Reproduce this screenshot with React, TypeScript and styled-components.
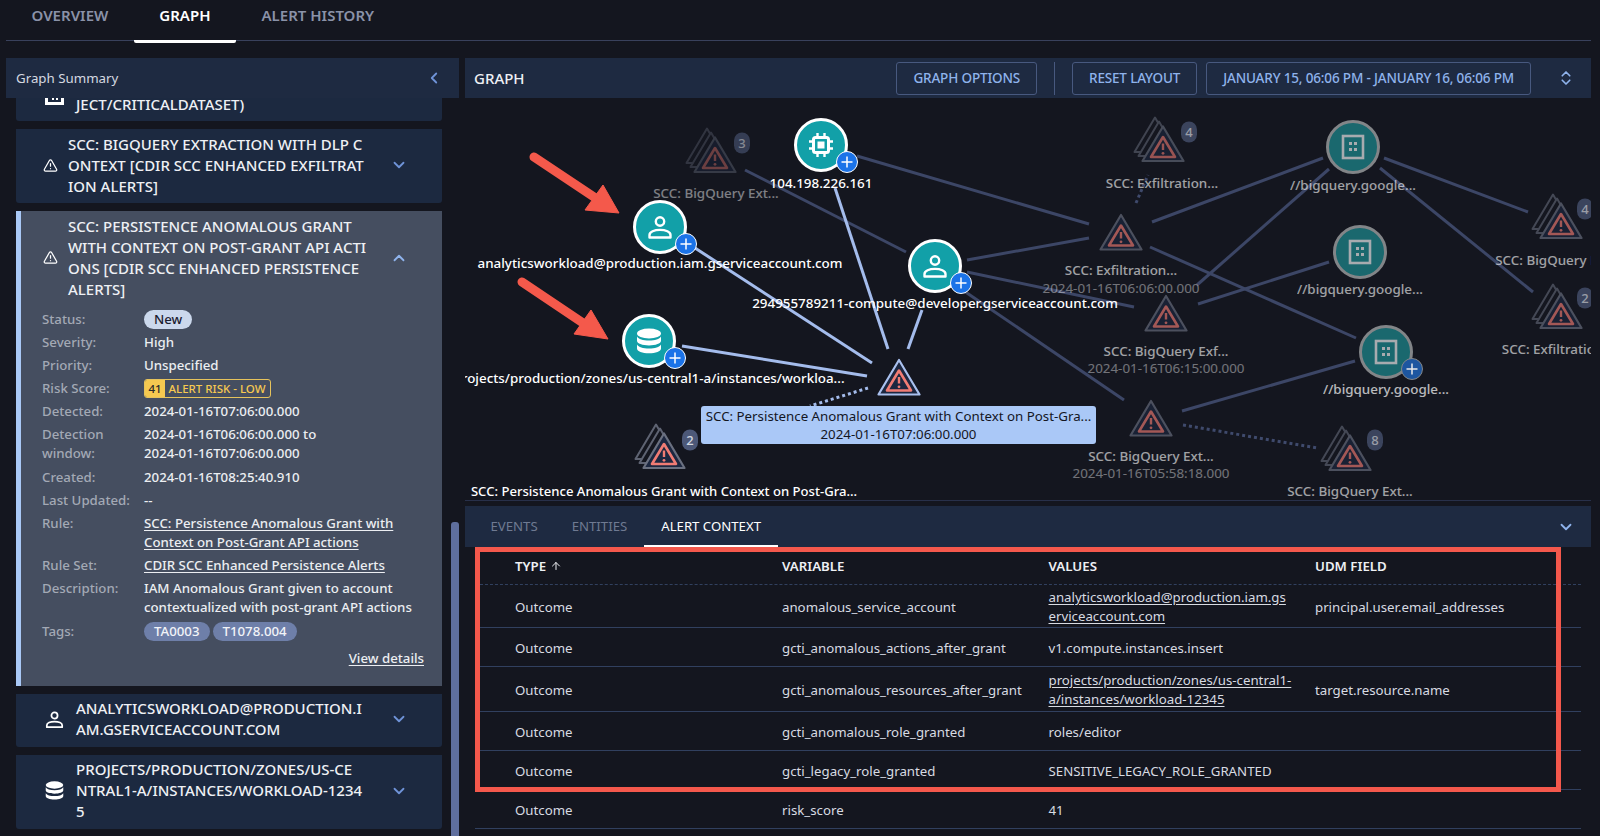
import React from 'react';
import styled, { createGlobalStyle } from 'styled-components';
import { ChevronDown, ChevronUp, ChevronLeft, ChevronsUpDown, TriangleAlert, ArrowUp } from 'lucide-react';

const GlobalStyle = createGlobalStyle`
  html, body { margin: 0; padding: 0; background: #14161f; }
  * { box-sizing: border-box; }
  body { font-family: "Noto Sans", "Open Sans", sans-serif; font-size: 14px; color: #e4e7ec; }
`;

const Page = styled.div`
  width: 1600px;
  height: 836px;
  overflow: hidden;
  background: #14161f;
`;

const TabBar = styled.div`
  display: flex;
  height: 41px;
  margin: 0 9px 0 6px;
  border-bottom: 1px solid #39415c;
`;

const Tab = styled.div<{ $active?: boolean }>`
  height: 43px;
  padding: 5px 25.5px 0;
  font-size: 15px;
  line-height: 20px;
  font-weight: 600;
  color: ${p => (p.$active ? '#ffffff' : '#8a92a8')};
  border-bottom: ${p => (p.$active ? '3px solid #ffffff' : '3px solid transparent')};
  border-radius: 0 0 2px 2px;
`;

const Main = styled.div`
  display: flex;
  gap: 6px;
  padding: 17px 9px 0 6px;
`;

const LeftPanel = styled.div`
  width: 453px;
  height: 778px;
  display: flex;
  flex-direction: column;
`;

const PanelHeader = styled.div`
  flex: none;
  height: 40px;
  display: flex;
  align-items: center;
  padding: 0 16px 0 10px;
  justify-content: space-between;
  background: #1e2a41;
  font-size: 13.3px;
  color: #d5d9e0;
`;

const LeftBody = styled.div`
  flex: 1;
  display: flex;
  overflow: hidden;
`;

const List = styled.div`
  width: 445px;
  padding: 0 9px 0 10px;
  display: flex;
  flex-direction: column;
  gap: 8px;
`;

const ScrollTrack = styled.div`
  width: 8px;
  padding-top: 424px;
`;

const ScrollThumb = styled.div`
  height: 320px;
  background: #5f6f9e;
  border-radius: 3px 3px 0 0;
`;

const Item = styled.div<{ $open?: boolean }>`
  flex: none;
  background: ${p => (p.$open ? '#454e60' : '#1c2940')};
  box-shadow: ${p => (p.$open ? 'inset 5px 0 0 #a9c8f6' : 'none')};
  border-radius: ${p => (p.$open ? '0' : '0 0 3px 3px')};
`;

const ItemHead = styled.div<{ $big?: boolean }>`
  display: flex;
  align-items: center;
  padding: 4.5px 34px 6.5px ${p => (p.$big ? '29px' : '27px')};
  gap: ${p => (p.$big ? '12px' : '10px')};
  color: #ffffff;
`;

const CutHead = styled(ItemHead)`
  height: 23px;
  padding-top: 0;
  padding-bottom: 0;
  align-items: flex-start;
`;

const ItemTitle = styled.div`
  flex: 1;
  font-size: 15px;
  line-height: 21px;
  font-weight: 500;
  white-space: nowrap;
  color: #eef0f4;
`;

const CutTitle = styled(ItemTitle)`
  margin-top: -4px;
`;

const TitleLine = styled.span`
  display: block;
`;

const Details = styled.div`
  display: grid;
  grid-template-columns: 102px 1fr;
  row-gap: 4.2px;
  padding: 3.5px 18px 0 26px;
  line-height: 19px;
  font-size: 13.25px;
  font-weight: 500;
`;

const Label = styled.div`
  color: #a3a9b5;
`;

const Value = styled.div`
  color: #eceef2;
  white-space: nowrap;
`;

const Linked = styled.a`
  color: #eceef2;
  text-decoration: underline;
  text-underline-offset: 2px;
`;

const Pill = styled.span<{ $tag?: boolean }>`
  display: inline-block;
  height: 19px;
  padding: 0 10px;
  margin-right: 3px;
  border-radius: 10px;
  line-height: 19px;
  background: ${p => (p.$tag ? '#6e7fa9' : '#cbd8ec')};
  color: ${p => (p.$tag ? '#f2f4f8' : '#1b2030')};
`;

const RiskBadge = styled.span`
  display: inline-flex;
  height: 19px;
  border: 1px solid #e6c35c;
  border-radius: 3px;
  overflow: hidden;
  font-size: 11.5px;
  line-height: 17px;
`;

const RiskNum = styled.span`
  width: 20px;
  text-align: center;
  background: #f6c950;
  color: #2a2a2a;
`;

const RiskText = styled.span`
  padding: 0 4px 0 3.5px;
  color: #f6c950;
`;

const ViewDetails = styled.div`
  margin-top: 8px;
  padding: 0 18px 18px 0;
  text-align: right;
  line-height: 19px;
  font-size: 13.25px;
  font-weight: 500;
`;

const RightPanel = styled.div`
  width: 1126px;
  display: flex;
  flex-direction: column;
`;

const GraphHeader = styled(PanelHeader)`
  padding: 0 16px 0 9px;
  justify-content: flex-start;
  font-size: 15px;
  font-weight: 500;
  color: #eef0f4;
`;

const GraphTools = styled.div`
  margin-left: auto;
  display: flex;
  align-items: center;
  gap: 9px;
`;

const ToolButton = styled.div`
  height: 33px;
  padding: 0 16px;
  display: flex;
  align-items: center;
  border: 1px solid #48597f;
  border-radius: 3px;
  font-size: 13.5px;
  letter-spacing: -0.16px;
  font-weight: 500;
  color: #8fb3ec;
  white-space: nowrap;
`;

const ToolDivider = styled.div`
  width: 1px;
  height: 33px;
  margin: 0 8px;
  background: #48597f;
`;

const UnfoldWrap = styled.div`
  display: flex;
  margin-left: 17px;
  color: #8fb3ec;
`;

const Canvas = styled.div`
  position: relative;
  height: 403px;
  overflow: hidden;
  border-bottom: 1px solid #28304a;
  background: #14161f;
`;

const EdgeLayer = styled.svg`
  position: absolute;
  inset: 0;
`;

const NodeBox = styled.div<{ $x: number; $y: number; $fade?: number }>`
  position: absolute;
  left: ${p => p.$x - 465}px;
  top: ${p => p.$y - 98}px;
  transform: translate(-50%, -50%);
  opacity: ${p => p.$fade ?? 1};
  display: flex;
`;

const Circle = styled.div<{ $dim?: boolean }>`
  width: 54px;
  height: 54px;
  border-radius: 50%;
  display: flex;
  align-items: center;
  justify-content: center;
  background: ${p => (p.$dim ? '#1b7177' : '#12a0a8')};
  border: 3px solid ${p => (p.$dim ? '#8f9294' : '#ffffff')};
`;

const PlusBadge = styled.div<{ $dim?: boolean }>`
  position: absolute;
  right: -10px;
  bottom: -1px;
  width: 22px;
  height: 22px;
  border-radius: 50%;
  background: ${p => (p.$dim ? '#1f5eae' : '#1b73e8')};
  border: 1.5px solid ${p => (p.$dim ? '#8f9294' : '#ffffff')};
  display: flex;
  align-items: center;
  justify-content: center;
`;

const CountBadge = styled.div<{ $x: number; $y: number; $fade?: number }>`
  position: absolute;
  left: ${p => p.$x - 465}px;
  top: ${p => p.$y - 98}px;
  transform: translate(-50%, -50%);
  width: 16px;
  height: 21px;
  border-radius: 8px;
  background: #4c5878;
  color: #d3d7e0;
  opacity: ${p => p.$fade ?? 1};
  font-size: 13px;
  line-height: 21px;
  font-weight: 500;
  text-align: center;
`;

const NodeLabel = styled.div<{ $x: number; $y: number; $tone?: number }>`
  position: absolute;
  left: ${p => p.$x - 465}px;
  top: ${p => p.$y - 98}px;
  transform: translate(-50%, -50%);
  white-space: nowrap;
  font-size: 13.4px;
  line-height: 19px;
  font-weight: 500;
  color: #ffffff;
  opacity: ${p => p.$tone ?? 1};
`;

const StampLabel = styled(NodeLabel)`
  font-weight: 400;
`;

const LongLabel = styled(NodeLabel)`
  font-size: 13.1px;
`;

const Tooltip = styled.div`
  position: absolute;
  left: 236px;
  top: 308px;
  width: 395px;
  height: 38px;
  border-radius: 3px;
  background: #aac8f7;
  color: #14161f;
  font-size: 13.3px;
  line-height: 18px;
  text-align: center;
  padding-top: 1px;
  white-space: nowrap;
`;

const BottomPanel = styled.div`
  position: relative;
  margin-top: 5px;
  flex: 1;
`;

const BottomHeader = styled.div`
  height: 41px;
  display: flex;
  align-items: flex-end;
  padding: 0 16px 0 8.5px;
  background: #1e2a41;
`;

const SubTab = styled.div<{ $active?: boolean }>`
  height: 38px;
  padding: 8px 17px 0;
  font-size: 13.2px;
  line-height: 19px;
  color: ${p => (p.$active ? '#ffffff' : '#6f7a92')};
  border-bottom: 2px solid ${p => (p.$active ? '#ffffff' : 'transparent')};
`;

const BottomChevron = styled.div`
  margin: 0 0 11px auto;
  display: flex;
  color: #8fb3ec;
`;

const Table = styled.div`
  margin: 0 10px;
`;

const Row = styled.div<{ $h: number; $head?: boolean }>`
  display: grid;
  grid-template-columns: 267px 266.5px 266.5px 1fr;
  align-items: center;
  height: ${p => p.$h}px;
  padding: ${p => (p.$head ? '1px' : '2px')} 0 0 40px;
  line-height: 19px;
  border-bottom: 1px ${p => (p.$head ? 'dashed' : 'solid')} #31405f;
  font-size: 13.25px;
  font-weight: ${p => (p.$head ? 600 : 400)};
  color: ${p => (p.$head ? '#eef0f4' : '#d8dbe2')};
`;

const HeadCell = styled.div`
  display: flex;
  align-items: center;
  gap: 4px;
`;

const CellLink = styled.a`
  display: block;
  color: #d8dbe2;
  text-decoration: underline;
  text-underline-offset: 2px;
  white-space: nowrap;
`;

const RedBox = styled.div`
  position: absolute;
  left: 10px;
  top: 41px;
  width: 1086px;
  height: 245px;
  border: 5px solid #f4584c;
  pointer-events: none;
`;

// icons

const PersonIcon = ({ size = 26 }: { size?: number }) => (
  <svg width={size} height={size} viewBox="0 0 26 26" fill="none" stroke="#fff" strokeWidth="2.4">
    <circle cx="13" cy="7.5" r="4.2" />
    <path d="M2.5 23.5v-2.6c0-3 4.8-5 10.5-5s10.5 2 10.5 5v2.6z" strokeLinejoin="round" />
  </svg>
);

const DbIcon = ({ size = 26 }: { size?: number }) => (
  <svg width={size} height={size} viewBox="0 0 26 26" fill="#fff">
    <ellipse cx="13" cy="5.5" rx="12" ry="5" />
    <path d="M1 8.6c1.6 2.6 6 4 12 4s10.4-1.4 12-4v4.2c0 2.8-5.4 4.6-12 4.6S1 15.600 1 12.800z" />
    <path d="M1 16.600c1.600 2.600 6 4 12 4s10.400-1.400 12-4v3.800c0 2.800-5.400 4.800-12 4.800S1 23.200 1 20.400z" />
  </svg>
);

const CpuIcon = () => (
  <svg width="28" height="28" viewBox="0 0 28 28" fill="none" stroke="#fff">
    <rect x="6.500" y="6.500" width="15" height="15" rx="2" strokeWidth="3" />
    <rect x="10.500" y="10.500" width="7" height="7" fill="#fff" strokeWidth="0" />
    <path d="M10.500 2v4M17.500 2v4M10.500 22v4M17.500 22v4M2 10.500h4M2 17.500h4M22 10.500h4M22 17.500h4" strokeWidth="2.400" />
  </svg>
);

const ResourceIcon = () => (
  <svg width="24" height="26" viewBox="0 0 24 26" fill="none">
    <rect x="2" y="2" width="20" height="22" stroke="#b9bcbf" strokeWidth="2.600" />
    <path d="M8 8h3v3H8zM13 8h3v3h-3zM8 14h3v3H8zM13 14h3v3h-3z" fill="#b9bcbf" />
  </svg>
);

const PlusIcon = () => (
  <svg width="12" height="12" viewBox="0 0 12 12" stroke="#fff" strokeWidth="1.500">
    <path d="M6 0.500v11M0.500 6h11" />
  </svg>
);

const AlertGlyph = ({ stroke, red }: { stroke: string; red: string }) => (
  <>
    <path d="M22 2.500 L42.500 37 H1.500 Z" fill="#1c2740" stroke={stroke} strokeWidth="2.200" strokeLinejoin="round" />
    <path d="M22 13 L34 33 H10 Z" fill="none" stroke={red} strokeWidth="2.600" strokeLinejoin="round" />
    <path d="M22 19.500v6.500" stroke={red} strokeWidth="2.400" />
    <circle cx="22" cy="29.300" r="1.400" fill={red} />
  </>
);

const AlertNode = ({ x, y, fade, selected }: { x: number; y: number; fade?: number; selected?: boolean }) => (
  <NodeBox $x={x} $y={y} $fade={fade}>
    <svg width="44" height="39" viewBox="0 0 44 39">
      <AlertGlyph stroke={selected ? '#a9c0ee' : '#6a7080'} red="#f07c74" />
    </svg>
  </NodeBox>
);

const StackNode = ({ x, y, fade }: { x: number; y: number; fade?: number }) => (
  <NodeBox $x={x} $y={y} $fade={fade}>
    <svg width="54" height="48" viewBox="-9 -9 54 48">
      <path d="M14 -6.500 L34 28 H-6.500 Z" fill="#14161f" stroke="#5e6372" strokeWidth="2" strokeLinejoin="round" />
      <path d="M18 -2.500 L38 32 H-2.500 Z" fill="#14161f" stroke="#5e6372" strokeWidth="2" strokeLinejoin="round" />
      <AlertGlyph stroke="#6a7080" red="#f07c74" />
    </svg>
  </NodeBox>
);

const CircleNode = ({ x, y, dim, plus, fade, children }: {
  x: number; y: number; dim?: boolean; plus?: boolean; fade?: number; children: React.ReactNode;
}) => (
  <NodeBox $x={x} $y={y} $fade={fade}>
    <Circle $dim={dim}>{children}</Circle>
    {plus && <PlusBadge $dim={dim}><PlusIcon /></PlusBadge>}
  </NodeBox>
);

const dimEdges = [
  [745, 170, 906, 252],
  [857, 156, 1089, 224],
  [967, 260, 1089, 238],
  [967, 272, 1134, 307],
  [1152, 222, 1323, 158],
  [1329, 169, 1197, 285],
  [1150, 247, 1356, 338],
  [1198, 304, 1329, 262],
  [1384, 158, 1528, 212],
  [1380, 168, 1533, 292],
  [964, 291, 1124, 400],
  [1182, 411, 1355, 361],
];

const brightEdges = [
  [835, 188, 888, 349],
  [922, 310, 908, 349],
  [695, 248, 872, 363],
  [682, 346, 867, 376],
];

const dottedEdges = [
  { line: [868, 388, 810, 406], color: '#a4bcec' },
  { line: [1183, 425, 1317, 448], color: '#3f4a6c' },
  { line: [1136, 203, 1148, 175], color: '#3f4a6c' },
];

const rows = [
  { h: 43, variable: 'anomalous_service_account', values: ['analyticsworkload@production.iam.gs', 'erviceaccount.com'], udm: 'principal.user.email_addresses' },
  { h: 39, variable: 'gcti_anomalous_actions_after_grant', text: 'v1.compute.instances.insert', udm: '' },
  { h: 45, variable: 'gcti_anomalous_resources_after_grant', values: ['projects/production/zones/us-central1-', 'a/instances/workload-12345'], udm: 'target.resource.name' },
  { h: 39, variable: 'gcti_anomalous_role_granted', text: 'roles/editor', udm: '' },
  { h: 39, variable: 'gcti_legacy_role_granted', text: 'SENSITIVE_LEGACY_ROLE_GRANTED', udm: '' },
  { h: 39, variable: 'risk_score', text: '41', udm: '' },
];

const Chevron = () => <ChevronDown size={18} color="#6f93d8" strokeWidth={2.4} />;

export default function App() {
  return (
    <Page>
      <GlobalStyle />
      <TabBar>
        <Tab>OVERVIEW</Tab>
        <Tab $active>GRAPH</Tab>
        <Tab>ALERT HISTORY</Tab>
      </TabBar>
      <Main>
        <LeftPanel>
          <PanelHeader>
            Graph Summary
            <ChevronLeft size={18} color="#6f93d8" strokeWidth={2.4} />
          </PanelHeader>
          <LeftBody>
            <List>
              <Item>
                <CutHead $big>
                  <svg width="19" height="8" viewBox="0 0 19 8" fill="#fff">
                    <path d="M0 0h3v4h13V0h3v7H0z" />
                    <path d="M7 0h2v2H7zM11 0h2v2h-2z" />
                  </svg>
                  <CutTitle>JECT/CRITICALDATASET)</CutTitle>
                </CutHead>
              </Item>
              <Item>
                <ItemHead>
                  <TriangleAlert size={15} color="#fff" strokeWidth={2} />
                  <ItemTitle>
                    <TitleLine>SCC: BIGQUERY EXTRACTION WITH DLP C</TitleLine>
                    <TitleLine>ONTEXT [CDIR SCC ENHANCED EXFILTRAT</TitleLine>
                    <TitleLine>ION ALERTS]</TitleLine>
                  </ItemTitle>
                  <Chevron />
                </ItemHead>
              </Item>
              <Item $open>
                <ItemHead>
                  <TriangleAlert size={15} color="#fff" strokeWidth={2} />
                  <ItemTitle>
                    <TitleLine>SCC: PERSISTENCE ANOMALOUS GRANT</TitleLine>
                    <TitleLine>WITH CONTEXT ON POST-GRANT API ACTI</TitleLine>
                    <TitleLine>ONS [CDIR SCC ENHANCED PERSISTENCE</TitleLine>
                    <TitleLine>ALERTS]</TitleLine>
                  </ItemTitle>
                  <ChevronUp size={18} color="#8fb3ec" strokeWidth={2.4} />
                </ItemHead>
                <Details>
                  <Label>Status:</Label>
                  <Value><Pill>New</Pill></Value>
                  <Label>Severity:</Label>
                  <Value>High</Value>
                  <Label>Priority:</Label>
                  <Value>Unspecified</Value>
                  <Label>Risk Score:</Label>
                  <Value>
                    <RiskBadge>
                      <RiskNum>41</RiskNum>
                      <RiskText>ALERT RISK - LOW</RiskText>
                    </RiskBadge>
                  </Value>
                  <Label>Detected:</Label>
                  <Value>2024-01-16T07:06:00.000</Value>
                  <Label>Detection<br />window:</Label>
                  <Value>2024-01-16T06:06:00.000 to<br />2024-01-16T07:06:00.000</Value>
                  <Label>Created:</Label>
                  <Value>2024-01-16T08:25:40.910</Value>
                  <Label>Last Updated:</Label>
                  <Value>--</Value>
                  <Label>Rule:</Label>
                  <Value>
                    <Linked>SCC: Persistence Anomalous Grant with</Linked><br />
                    <Linked>Context on Post-Grant API actions</Linked>
                  </Value>
                  <Label>Rule Set:</Label>
                  <Value><Linked>CDIR SCC Enhanced Persistence Alerts</Linked></Value>
                  <Label>Description:</Label>
                  <Value>IAM Anomalous Grant given to account<br />contextualized with post-grant API actions</Value>
                  <Label>Tags:</Label>
                  <Value><Pill $tag>TA0003</Pill><Pill $tag>T1078.004</Pill></Value>
                </Details>
                <ViewDetails><Linked>View details</Linked></ViewDetails>
              </Item>
              <Item>
                <ItemHead $big>
                  <PersonIcon size={19} />
                  <ItemTitle>
                    <TitleLine>ANALYTICSWORKLOAD@PRODUCTION.I</TitleLine>
                    <TitleLine>AM.GSERVICEACCOUNT.COM</TitleLine>
                  </ItemTitle>
                  <Chevron />
                </ItemHead>
              </Item>
              <Item>
                <ItemHead $big>
                  <DbIcon size={19} />
                  <ItemTitle>
                    <TitleLine>PROJECTS/PRODUCTION/ZONES/US-CE</TitleLine>
                    <TitleLine>NTRAL1-A/INSTANCES/WORKLOAD-1234</TitleLine>
                    <TitleLine>5</TitleLine>
                  </ItemTitle>
                  <Chevron />
                </ItemHead>
              </Item>
            </List>
            <ScrollTrack><ScrollThumb /></ScrollTrack>
          </LeftBody>
        </LeftPanel>

        <RightPanel>
          <GraphHeader>
            GRAPH
            <GraphTools>
              <ToolButton>GRAPH OPTIONS</ToolButton>
              <ToolDivider />
              <ToolButton>RESET LAYOUT</ToolButton>
              <ToolButton>JANUARY 15, 06:06 PM - JANUARY 16, 06:06 PM</ToolButton>
              <UnfoldWrap><ChevronsUpDown size={18} strokeWidth={2.2} /></UnfoldWrap>
            </GraphTools>
          </GraphHeader>

          <Canvas>
            <EdgeLayer width="1126" height="403" viewBox="465 98 1126 403">
              {dimEdges.map((e, i) => (
                <line key={i} x1={e[0]} y1={e[1]} x2={e[2]} y2={e[3]} stroke="#3c4666" strokeWidth="3" />
              ))}
              {brightEdges.map((e, i) => (
                <line key={i} x1={e[0]} y1={e[1]} x2={e[2]} y2={e[3]} stroke="#a4bcec" strokeWidth="3" />
              ))}
              {dottedEdges.map((d, i) => (
                <line key={i} x1={d.line[0]} y1={d.line[1]} x2={d.line[2]} y2={d.line[3]} stroke={d.color} strokeWidth="3" strokeDasharray="3 3" />
              ))}
            </EdgeLayer>

            <StackNode x={711} y={150} fade={0.4} />
            <CountBadge $x={742} $y={143} $fade={0.6}>3</CountBadge>
            <NodeLabel $x={716} $y={193} $tone={0.45}>SCC: BigQuery Ext...</NodeLabel>

            <StackNode x={1159} y={139} fade={0.6} />
            <CountBadge $x={1189} $y={132} $fade={0.7}>4</CountBadge>
            <NodeLabel $x={1162} $y={183} $tone={0.6}>SCC: Exfiltration...</NodeLabel>

            <AlertNode x={1121} y={232} fade={0.65} />
            <NodeLabel $x={1121} $y={270} $tone={0.6}>SCC: Exfiltration...</NodeLabel>
            <StampLabel $x={1121} $y={288} $tone={0.4}>2024-01-16T06:06:00.000</StampLabel>

            <AlertNode x={1166} y={313} fade={0.65} />
            <NodeLabel $x={1166} $y={351} $tone={0.6}>SCC: BigQuery Exf...</NodeLabel>
            <StampLabel $x={1166} $y={368} $tone={0.4}>2024-01-16T06:15:00.000</StampLabel>

            <AlertNode x={1151} y={418} fade={0.65} />
            <NodeLabel $x={1151} $y={456} $tone={0.6}>SCC: BigQuery Ext...</NodeLabel>
            <StampLabel $x={1151} $y={473} $tone={0.4}>2024-01-16T05:58:18.000</StampLabel>

            <StackNode x={1346} y={448} fade={0.65} />
            <CountBadge $x={1375} $y={440} $fade={0.7}>8</CountBadge>
            <NodeLabel $x={1350} $y={491} $tone={0.6}>SCC: BigQuery Ext...</NodeLabel>

            <StackNode x={1557} y={216} fade={0.65} />
            <CountBadge $x={1585} $y={209} $fade={0.7}>4</CountBadge>
            <NodeLabel $x={1558} $y={260} $tone={0.6}>SCC: BigQuery Ext...</NodeLabel>

            <StackNode x={1557} y={306} fade={0.65} />
            <CountBadge $x={1585} $y={298} $fade={0.7}>2</CountBadge>
            <NodeLabel $x={1558} $y={349} $tone={0.6}>SCC: Exfiltration...</NodeLabel>

            <CircleNode x={1353} y={147} dim fade={0.9}><ResourceIcon /></CircleNode>
            <NodeLabel $x={1353} $y={185} $tone={0.6}>//bigquery.google...</NodeLabel>
            <CircleNode x={1360} y={252} dim fade={0.9}><ResourceIcon /></CircleNode>
            <NodeLabel $x={1360} $y={289} $tone={0.6}>//bigquery.google...</NodeLabel>
            <CircleNode x={1386} y={352} dim plus fade={0.9}><ResourceIcon /></CircleNode>
            <NodeLabel $x={1386} $y={389} $tone={0.7}>//bigquery.google...</NodeLabel>

            <CircleNode x={821} y={145} plus><CpuIcon /></CircleNode>
            <NodeLabel $x={821} $y={183}>104.198.226.161</NodeLabel>
            <CircleNode x={660} y={227} plus><PersonIcon /></CircleNode>
            <NodeLabel $x={660} $y={263}>analyticsworkload@production.iam.gserviceaccount.com</NodeLabel>
            <CircleNode x={935} y={266} plus><PersonIcon /></CircleNode>
            <NodeLabel $x={935} $y={303}>294955789211-compute@developer.gserviceaccount.com</NodeLabel>
            <CircleNode x={649} y={341} plus><DbIcon /></CircleNode>
            <NodeLabel $x={649} $y={378}>projects/production/zones/us-central1-a/instances/workloa...</NodeLabel>

            <AlertNode x={899} y={377} selected />
            <Tooltip>
              SCC: Persistence Anomalous Grant with Context on Post-Gra...<br />
              2024-01-16T07:06:00.000
            </Tooltip>

            <StackNode x={660} y={446} />
            <CountBadge $x={690} $y={440}>2</CountBadge>
            <LongLabel $x={664} $y={491}>SCC: Persistence Anomalous Grant with Context on Post-Gra...</LongLabel>

            <EdgeLayer width="1126" height="403" viewBox="465 98 1126 403">
              <g fill="#f4594b" stroke="#f4594b" strokeLinejoin="round">
                <line x1="534" y1="157" x2="600" y2="201" strokeWidth="9" strokeLinecap="round" />
                <path d="M619 213 L603 185 L585 210 Z" strokeWidth="1" />
                <line x1="522" y1="282" x2="589" y2="327" strokeWidth="9" strokeLinecap="round" />
                <path d="M608 339 L591 310 L574 334 Z" strokeWidth="1" />
              </g>
            </EdgeLayer>
          </Canvas>

          <BottomPanel>
            <BottomHeader>
              <SubTab>EVENTS</SubTab>
              <SubTab>ENTITIES</SubTab>
              <SubTab $active>ALERT CONTEXT</SubTab>
              <BottomChevron><ChevronDown size={18} strokeWidth={2.4} /></BottomChevron>
            </BottomHeader>
            <Table>
              <Row $h={38} $head>
                <HeadCell>TYPE <ArrowUp size={12} strokeWidth={2} /></HeadCell>
                <div>VARIABLE</div>
                <div>VALUES</div>
                <div>UDM FIELD</div>
              </Row>
              {rows.map(r => (
                <Row key={r.variable} $h={r.h}>
                  <div>Outcome</div>
                  <div>{r.variable}</div>
                  <div>
                    {r.values
                      ? r.values.map(v => <CellLink key={v}>{v}</CellLink>)
                      : r.text}
                  </div>
                  <div>{r.udm}</div>
                </Row>
              ))}
            </Table>
            <RedBox />
          </BottomPanel>
        </RightPanel>
      </Main>
    </Page>
  );
}
